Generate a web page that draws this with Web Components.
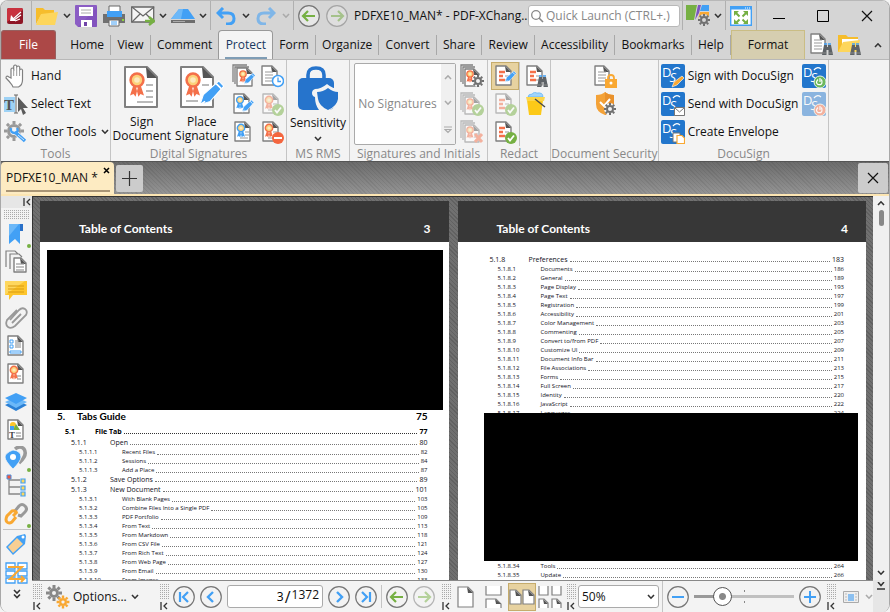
<!DOCTYPE html>
<html lang="en">
<head>
<meta charset="utf-8">
<title>PDFXE10_MAN* - PDF-XChange Editor</title>
<style>
    html, body { height: 100%; margin: 0; }
    body {
        background: #f4f4f4;
        color: #111;
        font: 12px/16px "Open Sans", "Noto Sans", sans-serif;
        overflow: hidden;
    }
</style>
</head>
<body>
<app-window></app-window>

<script>
// ---------- icons ----------
const GREY = '#808080', BLUE = '#42a0f5', ORANGE = '#f9a832', RED = '#f4704a', GREEN = '#76b043';

// sheet of paper with a folded corner
const sheet = (x, y, w, h, f = 5, sw = 1.4) => `
    <path d="M${x} ${y}h${w - f}l${f} ${f}v${h - f}h${-w}z" fill="#fff" stroke="${GREY}" stroke-width="${sw}" stroke-linejoin="round"/>
    <path d="M${x + w - f - 1} ${y}l1 ${f + 1}h${f}z" fill="#555"/>`;

// award rosette, centred on x,y
const rosette = (x, y, s = 1, c = RED) => `
    <g transform="translate(${x} ${y}) scale(${s})">
        <path d="M-2 2l-3 9 2.500-1 1.500 2 2-8zM2 2l3 9-2.500-1-1.500 2-2-8z" fill="${c}"/>
        <circle r="4.600" fill="#fbd27a" stroke="${c}" stroke-width="1.800"/>
        <circle r="2" fill="#fff" opacity=".5"/>
    </g>`;

const lines = (x, y, w, n, gap = 3, c = '#999') => {
    let out = '';
    for (let i = 0; i < n; i++) out += `<path d="M${x} ${y + i * gap}h${w}" stroke="${c}" stroke-width="1.200"/>`;
    return out;
};

const pen = (x, y, s = 1) => `
    <g transform="translate(${x} ${y}) scale(${s})">
        <path d="M0 14l2-6 9-8 3 3-8 9z" fill="${BLUE}" stroke="#fff" stroke-width=".600"/>
        <path d="M9.500 1.500l3 3M0 14l3-2" stroke="#fff" stroke-width="1"/>
    </g>`;

const okBadge = (x = 18, y = 18) => `<circle cx="${x}" cy="${y}" r="6" fill="${GREEN}"/><path d="M${x - 3} ${y}l2 2.500 4-5" fill="none" stroke="#fff" stroke-width="1.800"/>`;

const gear = (x, y, r, c, w = 2) => {
    let teeth = '';
    for (let a = 0; a < 360; a += 45) teeth += `<path d="M0 ${-r}V${-r - w}" stroke="${c}" stroke-width="${w}" transform="rotate(${a})"/>`;
    return `<g transform="translate(${x} ${y})">${teeth}<circle r="${r - w / 2}" fill="none" stroke="${c}" stroke-width="${w}"/></g>`;
};

const binoculars = (x, y) => `
    <g transform="translate(${x} ${y})">
        <path d="M2 1h3v2h1v-2h3l2 10H6.500V6h-2v5H0z" fill="#5d6266"/>
        <path d="M2 0h3M6 0h3" stroke="${BLUE}" stroke-width="1.500"/><path d="M0 9h4M7 9h4" stroke="#888"/>
    </g>`;

const signed = c => sheet(3, 2, 15, 19) + rosette(9, 8, .8, c) + lines(13, 12, 4, 2) + lines(8, 18, 8, 1);
const stack = () => `<path d="M1 18V1h12M3 20V3h12" fill="none" stroke="${GREY}" stroke-width="1.300"/>` + sheet(5, 5, 14, 17) + rosette(10, 10, .7) + lines(14, 14, 4, 2);
const redactDoc = () => sheet(3, 2, 15, 19) + `<path d="M6 8h6M6 12h4M6 16h6" stroke="${RED}" stroke-width="2.400"/>` + lines(12, 12, 4, 2, 4);
const docusign = extra => `
    <rect width="24" height="24" rx="2" fill="#2276cc"/>
    <text x="1" y="13" font-family="Open Sans, sans-serif" font-size="13" fill="#fff">D<tspan dx="-2" dy="5" font-style="italic">S</tspan></text>
    <path d="M12 6q3-4 7-1" fill="none" stroke="#fff" stroke-width="1.300"/>${extra}`;
const power = c => `<circle cx="18" cy="18" r="6" fill="${c}" stroke="#e8f2e8"/><path d="M16 15.500q-3 3 0 5 4 1 4-2.500 0-2-1-2.500M18 14v4" fill="none" stroke="#fff" stroke-width="1.200"/>`;
const circleBtn = (inner, o = 1) => [22, 22, `<g opacity="${o}"><circle cx="11" cy="11" r="10.300" fill="#f3f3f3" fill-opacity=".6" stroke="#777" stroke-width="1.200"/>${inner}</g>`];
const arrowR = c => `<path d="M5 11h12M12 6l5 5-5 5" fill="none" stroke="${c}" stroke-width="2.200"/>`;
const arrowL = c => `<path d="M17 11H5M10 6l-5 5 5 5" fill="none" stroke="${c}" stroke-width="2.200"/>`;
const fold = (x, y, w, h) => `<path d="M${x} ${y}h${w - 5}l5 5v${h - 5}h${-w}z" fill="#fff" stroke="${GREY}" stroke-width="1.200"/><path d="M${x + w - 6} ${y}l1 6h5z" fill="#555"/>`;
const dots = (w, h) => {
    let d = '';
    for (let y = 0; y < h; y += 2) for (let x = 0; x < w; x += 2) d += `M${x} ${y}h1v1h-1z`;
    return `<path d="${d}" fill="#aaa"/>`;
};

// name: [width, height, markup]
const ICONS = {
    logo: [16, 16, `<rect width="16" height="16" rx="2" fill="#8e1626"/><path d="M0 2q0-2 2-2h12q2 0 2 2L0 14z" fill="#c8323f"/><path d="M14 4L6 11M14 7l-7 5M13 11l-5 2" stroke="#fff" stroke-width="1.300"/><path d="M3 13l1-6 5 6z" fill="#fff"/>`],
    folder: [24, 20, `<path d="M1 18V2h7l2 2h9v5H6z" fill="#f6bd2c"/><path d="M1 19L6 8l17-2-3 13z" fill="#fdd65c"/>`],
    chevron: [8, 6, `<path d="M1 1l3 3.200L7 1" fill="none" stroke="currentColor" stroke-width="1.600"/>`],
    save: [22, 22, `<path d="M1 0h20q1 0 1 1v20q0 1-1 1H3l-3-3V1q0-1 1-1z" fill="#8b5dc4"/><path d="M22 2v19q0 1-1 1H3z" fill="#7d4cbb" opacity=".6"/><path d="M4 2h14v9H4z" fill="#fff"/><path d="M6 5h10M6 8h10" stroke="#aaa"/><path d="M6 15h11v7H6z" fill="#fff"/><path d="M9 17h3v4H9z" fill="#7145a8"/>`],
    printer: [22, 22, `<path d="M6 1h11v8H6z" fill="#fff" stroke="#666"/><path d="M0 9h22v9H0z" fill="#707070"/><path d="M4 6h15v6H4z" fill="${BLUE}"/><path d="M6 15h10v6H6z" fill="#fff" stroke="#666"/><path d="M8 17h6M8 19h6" stroke="${BLUE}"/><path d="M19 15h2" stroke="#8ed43c" stroke-width="2"/>`],
    mail: [24, 20, `<path d="M.700 1h22v15h-22z" fill="#f4f4f4" stroke="#666" stroke-width="1.300"/><path d="M1 1l11 9L23 1M1 16l8-8M23 16l-8-8" fill="none" stroke="#666" stroke-width="1.200"/><path d="M14 15h8M18 11l5 4-5 4" fill="none" stroke="${GREEN}" stroke-width="2.400"/>`],
    scanner: [24, 16, `<path d="M0 11L8 1h9l7 10z" fill="${BLUE}"/><path d="M8 1h4l-2 10H0z" fill="#6cb8f8"/><path d="M0 12h24v3H0z" fill="#6d6d6d"/><path d="M2 13.500h12" stroke="#aaa"/>`],
    undo: [20, 18, `<path d="M7 1L2 6l5 5M2 6h10q6 0 6 5.500T12 17h-2" fill="none" stroke="${BLUE}" stroke-width="3"/>`],
    redo: [20, 18, `<path d="M13 1l5 5-5 5M18 6H8q-6 0-6 5.500T8 17h2" fill="none" stroke="#7fb6e8" stroke-width="3"/>`],
    back: circleBtn(arrowL(GREEN)),
    forward: circleBtn(arrowR(GREEN), .5),
    search: [14, 14, `<circle cx="6" cy="6" r="4.300" fill="none" stroke="#888" stroke-width="1.300"/><path d="M9 9l4 4" stroke="#888" stroke-width="1.600"/>`],
    map: [24, 22, `<path d="M0 0h11l-3 15H0z" fill="${GREEN}"/><path d="M12 0h3l-2 8-4 7z" fill="#7b55c0"/><path d="M16 0h7v6h-9z" fill="${BLUE}"/><path d="M14 7h9v7H12z" fill="${ORANGE}"/><circle cx="18" cy="15" r="6" fill="#d5d5d5"/>` + gear(18, 15, 4, '#707070', 2)],
    fullscreen: [22, 20, `<path d="M.700.700h20.600v18.600H.700z" fill="#fff" stroke="${BLUE}" stroke-width="1.400"/><path d="M1 2h20" stroke="${BLUE}" stroke-width="3"/><path d="M15 2h1M17 2h1M19 2h1" stroke="#fff"/><path d="M6 7l3.500 3.500M16 7l-3.500 3.500M6 17l3.500-3.500M16 17l-3.500-3.500" stroke="${GREEN}" stroke-width="2"/><path d="M4 5h5l-5 5zM18 5v5l-5-5zM4 18v-5l5 5zM18 18h-5l5-5z" fill="${GREEN}"/>`],
    min: [12, 12, `<path d="M0 8.500h12" stroke="#000"/>`],
    max: [12, 12, `<path d="M.500.500h11v11H.500z" fill="none" stroke="#000"/>`],
    close: [12, 12, `<path d="M1 1l10 10M11 1L1 11" stroke="#111" stroke-width="1.200"/>`],
    closeTab: [7, 7, `<path d="M1 1l5 5M6 1L1 6" stroke="#000" stroke-width="1.500"/>`],
    plus: [15, 15, `<path d="M7.500 0v15M0 7.500h15" stroke="#333" stroke-width="1.200"/>`],
    findDoc: [23, 23, sheet(1, 1, 14, 19) + lines(4, 7, 8, 4) + binoculars(12, 11)],
    findFolder: [24, 23, `<path d="M0 19V2h8l2 2h10v15z" fill="#f6bd2c"/><path d="M4 6h16v5H4z" fill="#fff"/><path d="M0 19L5 9l17-2-3 12z" fill="#fdd65c"/>` + binoculars(12, 11)],
    hand: [24, 24, `<path d="M8 21q-2-3-6-7 0-3 3-1l2 1V5q1.500-2 2.700 0V2q1.500-2 3 0v1q1.500-2 3 0v3q1.500-2 2.800 0v10q0 5-4 7H9z" fill="#fff" stroke="${GREY}" stroke-width="1.200"/><path d="M9.700 5v7M12.700 3v9M15.600 5v7" stroke="#999"/>`],
    selectText: [24, 22, `<path d="M0 4h11v15H0z" fill="#9ed2f5"/><text x="0" y="17" font-family="Liberation Serif, serif" font-weight="bold" font-size="15" fill="#555">T</text><path d="M10 2h4M10 20h4M12 2v18" stroke="#666"/><path d="M14 4l10 11h-5l3 5-3 2-2-6-3 3z" fill="#5a5a5a"/>`],
    otherTools: [24, 24, gear(10, 11, 7, '#999', 3) + `<path d="M10 11l11 10" stroke="#f3f3f3" stroke-width="5"/><path d="M11 12l10 9" stroke="${BLUE}" stroke-width="3.400"/><path d="M7 8q-1 5 4 5 4-1 2-5" fill="none" stroke="${BLUE}" stroke-width="2.400"/><path d="M14 15l6 5" stroke="#cde6fc"/>`],
    signDoc: [38, 44, sheet(2, 2, 32, 40, 10, 2) + rosette(14, 15, 1.4) + lines(23, 20, 7, 3, 6, '#777') + lines(14, 37, 16, 1, 4, '#777')],
    placeSig: [44, 44, sheet(1, 2, 32, 40, 10, 2) + rosette(13, 15, 1.4) + lines(22, 20, 7, 1, 4, '#777') + lines(6, 36, 12, 1, 4, '#777') + pen(20, 16, 1.7)],
    signAll: [24, 24, `<path d="M1 18V1h14M3 20V3h14" fill="none" stroke="${GREY}" stroke-width="1.300"/>` + sheet(5, 4, 15, 18) + rosette(11, 10, .7) + pen(12, 9, .8)],
    timestamp: [24, 24, sheet(2, 2, 15, 19) + lines(5, 8, 8, 4) + `<circle cx="18" cy="17" r="5.500" fill="#fff" stroke="${BLUE}" stroke-width="1.500"/><path d="M18 13.500v4h3" fill="none" stroke="${BLUE}" stroke-width="1.300"/>`],
    signPen: [24, 24, sheet(2, 2, 15, 19) + rosette(8, 8, .75, BLUE) + pen(10, 8, .85)],
    validate: [24, 24, `<g opacity=".5">${signed(RED)}${okBadge()}</g>`],
    certify: [24, 24, signed(BLUE)],
    removeSig: [24, 24, signed(RED) + `<circle cx="18" cy="18" r="6" fill="#f4663f"/><path d="M14 18h8" stroke="#fff" stroke-width="2.200"/>`],
    sensitivity: [42, 44, `<path d="M11 14V9q0-7 8-7t8 7v5" fill="none" stroke="#2674cc" stroke-width="3.600"/><rect x="1" y="12" width="36" height="32" rx="5" fill="#2674cc"/><path d="M22 44q-4-5-4-13-3-1-3-4t3-4q6 0 12-5 6 5 12 5v15l-9 6z" fill="#f3f3f3"/><path d="M20 26q6 0 11-4 5 4 10 4v7q-1 7-10 11-9-4-10-11z" fill="#2674cc"/>`],
    initials: [24, 24, stack() + `<circle cx="18" cy="17" r="6" fill="#f3f3f3"/>` + gear(18, 17, 4, '#707070', 2)],
    initialsOk: [24, 24, `<g opacity=".5">${stack()}${okBadge()}</g>`],
    initialsDel: [24, 24, `<g opacity=".5">${stack()}<path d="M15 14l7 8M22 14l-7 8" stroke="${RED}" stroke-width="3"/></g>`],
    redactMark: [24, 24, redactDoc() + pen(12, 7, .8)],
    redactOkOff: [24, 24, `<g opacity=".5">${redactDoc()}${okBadge()}</g>`],
    redactOk: [24, 24, redactDoc() + okBadge()],
    redactFind: [24, 24, redactDoc() + binoculars(13, 12)],
    bucket: [24, 24, `<path d="M4 5q0-3 4-3 2-3 5-1 6-1 6 4z" fill="#9fd4fb" stroke="${BLUE}" stroke-width=".500"/><path d="M3 8h16l-2 15H5z" fill="#fcc918"/><path d="M2 5h19l-1 4H3z" fill="#fdd64a"/><path d="M11 7l10 8" stroke="#4a4a4a" stroke-width="1.500"/>`],
    lockDoc: [24, 24, sheet(2, 2, 14, 19) + lines(5, 8, 8, 4) + `<path d="M15 16v-2q0-3 3-3t3 3v2" fill="none" stroke="${ORANGE}" stroke-width="1.800"/><path d="M12 15h12v9H12z" fill="${ORANGE}"/><circle cx="18" cy="19" r="1.500" fill="#fff"/>`],
    shield: [24, 24, `<path d="M3 3q6 0 9-3 3 3 9 3v9q-1 8-9 11Q3 20 3 12z" fill="#f4a237"/><path d="M12 0q3 3 9 3v9q-1 8-9 11z" fill="#e9912b"/><path d="M7 10l4 4 6-7" fill="none" stroke="#fff" stroke-width="2"/><circle cx="17" cy="17" r="6" fill="#f3f3f3"/>` + gear(17, 17, 4, '#707070', 2)],
    dsSign: [24, 24, docusign(`<path d="M11 23l2-5 8-6 2 2-7 7z" fill="${ORANGE}" stroke="#fff" stroke-width=".600"/>`)],
    dsSend: [24, 24, docusign(`<path d="M13.500 15.500h10v8h-10z" fill="#fff" stroke="#777"/><path d="M14 16l4.500 4 4.500-4" fill="none" stroke="#777"/>`)],
    dsEnvelope: [24, 24, docusign(`<path d="M12 13h7v9h-7z" fill="#fff" stroke="#777"/><path d="M16 15.500h5l2.500 2.500v5.500H16z" fill="#fff" stroke="${ORANGE}" stroke-width="1.200"/>`)],
    dsOn: [24, 24, docusign(power('#6cb85c'))],
    dsOff: [24, 24, `<g opacity=".5">${docusign(power(RED))}</g>`],
    up: [8, 6, `<path d="M1 5l3-3.200L7 5" fill="none" stroke="currentColor" stroke-width="1.600"/>`],
    more: [8, 8, `<path d="M0 1h8M1 3.500l3 3 3-3z" fill="none" stroke="currentColor" stroke-width="1.200"/>`],
    doubleDown: [8, 10, `<path d="M1 1l3 3 3-3M1 5.500l3 3 3-3" fill="none" stroke="currentColor" stroke-width="1.600"/>`],
    pageDown: [8, 8, `<path d="M1 0l3 3.500L7 0M0 7h8" fill="none" stroke="currentColor" stroke-width="1.500"/>`],
    dock: [8, 8, `<path d="M1 0v8M7 1L4 4l3 3" fill="none" stroke="#333" stroke-width="1.300"/>`],
    grip: [10, 16, dots(10, 16)],
    gripWide: [26, 10, dots(26, 10)],
    bookmark: [24, 24, `<path d="M5 2h14v7h-3v13l-5-5-6 5z" fill="${BLUE}"/><path d="M5 2h10L5 14z" fill="#6cb8f8"/><path d="M16 2h3v7h-3z" fill="#2a70c8"/>`],
    thumbs: [24, 24, `<path d="M2 17V1h9l3 3M6 19V4h9l3 3" fill="none" stroke="${GREY}" stroke-width="1.200"/>` + sheet(10, 8, 12, 14) + lines(12, 14, 8, 3)],
    comments: [24, 24, `<path d="M1 3h22v14H9l-4 5v-5H1z" fill="#fdc52c"/><path d="M1 3h20L1 17z" fill="#fed75e"/><path d="M4 8h16M4 11h16M4 14h16" stroke="#d89b10"/>`],
    clip: [24, 24, `<path d="M6 14L15 4q3-3 6-1t1 6L11 20q-4 3-7 1t-1-7L13 4M8 17l9-9" fill="none" stroke="#999" stroke-width="1.800"/>`],
    fields: [24, 24, sheet(4, 2, 15, 19) + `<path d="M6 6h3v3H6zM6 11h3v3H6zM6 17h11v2H6z" fill="none" stroke="${BLUE}"/>` + lines(11, 7, 4, 1) + lines(11, 9, 6, 3, 2)],
    sigPanel: [24, 24, sheet(4, 2, 15, 19) + rosette(10, 8, .8) + lines(13, 14, 4, 2)],
    layers: [24, 24, `<path d="M1 15l11 6 11-6-11-5z" fill="#2a7fd4"/><path d="M1 12l11 6 11-6-11-5z" fill="#6cb8f8"/><path d="M1 8l11 6 11-6-11-5z" fill="${BLUE}"/>`],
    content: [24, 24, sheet(4, 2, 15, 19) + `<circle cx="9" cy="7" r="3" fill="#fcc52c"/><path d="M12 6l4 6H9z" fill="${GREEN}"/><path d="M6 8h4v4H6z" fill="${BLUE}"/><text x="5" y="20" font-family="Liberation Serif, serif" font-weight="bold" font-size="9" fill="#444">T</text>` + lines(12, 15, 5, 2)],
    places: [24, 24, `<path d="M11 3q5-4 9 0 4 6-5 14" fill="none" stroke="#999" stroke-width="3.500"/><path d="M9 23Q1 15 1 11t8-7q8 1 8 7 0 4-8 12z" fill="${BLUE}" stroke="#f3f3f3" stroke-width=".800"/><circle cx="9" cy="11" r="3" fill="#fff"/>`],
    tree: [24, 24, `<path d="M5 3v17h11M5 6h11M5 13h11" fill="none" stroke="#888" stroke-width="1.300"/><path d="M3 1h4v4H3z" fill="#f4563a" stroke="#4a90e0"/><path d="M17 5h4v4h-4zM17 12h4v4h-4zM17 18h4v4h-4z" fill="#fdd65c" stroke="${BLUE}" stroke-width="1.200"/>`],
    links: [24, 24, `<path d="M11 9l4-5q3-3 6 0t0 6l-4 4-3-1" fill="none" stroke="#999" stroke-width="3"/><path d="M12 15l-4 5q-3 2-5 0t0-6l5-5q3-1 5 2M9 14l4-4" fill="none" stroke="${ORANGE}" stroke-width="3"/>`],
    tag: [24, 24, `<path d="M2 14L13 3l8-2 1 2-1 8L9 22z" fill="${BLUE}"/><path d="M4 14l9-9 6 6-10 9z" fill="#f8cf94"/><circle cx="19" cy="4" r="1.500" fill="#fff"/>`],
    order: [24, 24, `<path d="M2 2h9v6H2zM14 2h9v6h-9zM2 10h9v5H2zM14 10h9v5h-9zM2 17h9v5H2zM14 17h9v5h-9z" fill="#fff" stroke="${BLUE}" stroke-width="1.300"/><path d="M4 6h14L6 18h13M17 15l3 3-3 3" fill="none" stroke="${ORANGE}" stroke-width="2"/>`],
    gears: [24, 24, gear(8, 8, 5, '#888', 3) + gear(17, 17, 4, '#f9a832', 2.400)],
    first: circleBtn(`<path d="M7 6v10M15 6l-5 5 5 5" fill="none" stroke="${BLUE}" stroke-width="2.200"/>`),
    prev: circleBtn(`<path d="M13 6l-5 5 5 5" fill="none" stroke="${BLUE}" stroke-width="2.400"/>`),
    next: circleBtn(`<path d="M9 6l5 5-5 5" fill="none" stroke="${BLUE}" stroke-width="2.400"/>`),
    last: circleBtn(`<path d="M15 6v10M7 6l5 5-5 5" fill="none" stroke="${BLUE}" stroke-width="2.200"/>`),
    zoomOut: circleBtn(`<path d="M5 11h12" stroke="${BLUE}" stroke-width="2"/>`),
    zoomIn: circleBtn(`<path d="M5 11h12M11 5v12" stroke="${BLUE}" stroke-width="2"/>`),
    single: [24, 24, fold(4, 2, 15, 20)],
    continuous: [24, 24, `<path d="M4 1v9h15V1" fill="#fff" stroke="${GREY}" stroke-width="1.200"/><path d="M4 23v-9h10l5 5v4" fill="#fff" stroke="${GREY}" stroke-width="1.200"/><path d="M13 14l1 5h5z" fill="#555"/>`],
    twoPages: [26, 24, fold(1, 5, 11, 14) + fold(14, 5, 11, 14)],
    twoCont: [24, 24, `<path d="M1 1v9h9V1M14 1v9h9V1M1 23v-9h5l4 4v5M14 23v-9h5l4 4v5" fill="#fff" stroke="${GREY}" stroke-width="1.200"/><path d="M5 14l1 5h4zM18 14l1 5h4z" fill="#555"/>`],
    fit: [16, 12, `<path d="M.500.500h15v11H.500z" fill="#eee" stroke="#aaa"/><path d="M5 3h6v7H5z" fill="#8cc0f0"/><path d="M2 3h2M2 6h2M2 9h2M12 3h2M12 6h2M12 9h2" stroke="#bbb"/>`]
};

// ---------- components ----------
// registers an element whose shadow root is cloned from a template
function define(name, html) {
    const template = document.createElement('template');
    template.innerHTML = html;
    customElements.define(name, class extends HTMLElement {
        constructor() {
            super();
            this.attachShadow({ mode: 'open' }).append(template.content.cloneNode(true));
        }
    });
}

class UiIcon extends HTMLElement {
    constructor() {
        super();
        this.attachShadow({ mode: 'open' });
    }
    connectedCallback() {
        const [w, h, body] = ICONS[this.getAttribute('name')];
        this.shadowRoot.innerHTML = `
            <style>
                :host { display: block; flex: none; color: #333; }
                svg { display: block; }
            </style>
            <svg width="${w}" height="${h}" viewBox="0 0 ${w} ${h}" aria-hidden="true">${body}</svg>`;
    }
}
customElements.define('ui-icon', UiIcon);

// button with an icon and an optional slotted caption
class ToolButton extends HTMLElement {
    constructor() {
        super();
        this.attachShadow({ mode: 'open' });
    }
    connectedCallback() {
        const label = this.getAttribute('label');
        this.shadowRoot.innerHTML = `
            <style>
                :host { display: block; flex: none; }
                button {
                    display: flex; align-items: center; gap: 3px;
                    width: 100%; height: 100%; padding: 0; border: 0;
                    background: none; color: inherit; font: inherit; white-space: nowrap;
                }
                :host([big]) button { flex-direction: column; justify-content: start; gap: 6px; line-height: 14px; }
                :host([center]) button { justify-content: center; }
                :host([pressed]) button { background: #e7d2a0; border: 1px solid #c6ac6c; }
                :host([dim]) ui-icon { color: #aaa; }
            </style>
            <button type="button"${label ? ` aria-label="${label}"` : ''}>
                <ui-icon name="${this.getAttribute('icon')}"></ui-icon><slot></slot>
            </button>`;
    }
}
customElements.define('tool-button', ToolButton);

define('title-bar', `
    <style>
        :host { display: flex; align-items: center; height: 29px; padding: 0 16px 0 6px; background: #d5d5d5; }
        .sep { width: 1px; align-self: stretch; background: #b0b0b0; flex: none; }
        .files { display: flex; align-items: center; gap: 4px; padding: 0 3px; margin-left: 8px; border-left: 1px solid #b0b0b0; align-self: stretch; }
        .files [icon=save], .files [icon=printer] { margin-right: 2px; }
        .nav { display: flex; align-items: center; gap: 6px; padding: 0 3px 0 5px; }
        .history { display: flex; gap: 6px; padding: 0 6px 0 4px; }
        h1 { margin: 0; font: inherit; white-space: nowrap; flex: 0 0 auto; min-width: 174px; }
        label {
            display: flex; align-items: center; gap: 2px; flex: 1 1 0; min-width: 0;
            height: 22px; box-sizing: border-box; padding: 0 0 0 1px; margin-right: 2px;
            border: 1px solid #b8b8b8; border-radius: 3px; background: #fff;
        }
        input { flex: 1; min-width: 0; padding: 0; border: 0; outline: 0; font: inherit; background: none; }
        input::placeholder { color: #888; opacity: 1; }
        .view { display: flex; align-items: center; gap: 4px; padding: 0 3px; }
        .full { padding: 0 4px; }
        .win { display: flex; align-items: center; gap: 32px; padding-left: 16px; }
        .files, .nav, .history, .view { flex: none; }
    </style>
    <ui-icon name="logo"></ui-icon>
    <div class="files">
        <tool-button icon="folder" label="Open"></tool-button>
        <tool-button icon="chevron" label="Open recent"></tool-button>
        <tool-button icon="save" label="Save"></tool-button>
        <tool-button icon="printer" label="Print"></tool-button>
        <tool-button icon="mail" label="Email"></tool-button>
        <tool-button icon="chevron" label="Email options"></tool-button>
        <tool-button icon="scanner" label="Scan"></tool-button>
        <tool-button icon="chevron" label="Scan options"></tool-button>
    </div>
    <span class="sep"></span>
    <div class="nav">
        <tool-button icon="undo" label="Undo"></tool-button>
        <tool-button icon="chevron" label="Undo list"></tool-button>
        <tool-button icon="redo" label="Redo"></tool-button>
        <tool-button icon="chevron" dim label="Redo list"></tool-button>
    </div>
    <span class="sep"></span>
    <div class="history">
        <tool-button icon="back" label="Previous view"></tool-button>
        <tool-button icon="forward" label="Next view"></tool-button>
    </div>
    <h1>PDFXE10_MAN* - PDF-XChang..</h1>
    <label><ui-icon name="search"></ui-icon><input type="text" placeholder="Quick Launch (CTRL+.)" aria-label="Quick Launch"></label>
    <span class="sep"></span>
    <div class="view">
        <tool-button icon="map" label="UI options"></tool-button>
        <tool-button icon="chevron" label="UI options list"></tool-button>
    </div>
    <span class="sep"></span>
    <div class="view full"><tool-button icon="fullscreen" label="Full screen"></tool-button></div>
    <span class="sep"></span>
    <div class="win">
        <tool-button icon="min" label="Minimize"></tool-button>
        <tool-button icon="max" label="Maximize"></tool-button>
        <tool-button icon="close" label="Close"></tool-button>
    </div>
`);

define('ribbon-tab', `
    <style>
        :host { display: flex; flex: 1 1 auto; align-items: center; }
        button {
            flex: 1; height: 29px; padding: 0; border: 0; background: none;
            color: inherit; font: inherit; white-space: nowrap;
        }
        :host::after { content: ""; width: 1px; height: 20px; background: #a8a8a8; }
        :host([plain])::after, :host([kind])::after { display: none; }
        :host([kind=file]) { flex: 0 0 55px; margin-right: 8px; }
        :host([kind=file]) button { background: #ac4847; color: #fff; border-radius: 3px 3px 0 0; border: 1px solid #96605f; border-bottom: 0; }
        :host([kind=active]) button {
            background: #f4f4f4 linear-gradient(#7f9db5, #7f9db5) center bottom / 42px 2px no-repeat;
            color: #17375e; border: 1px solid #999; border-bottom: 0; border-radius: 4px 4px 0 0;
        }
        :host([kind=format]) { flex: 0 0 74px; }
        :host([kind=format]) button { background: #d6ceb0; border: 1px solid #cabd84; border-bottom: 0; }
    </style>
    <button type="button"><slot></slot></button>
`);

define('ribbon-tabs', `
    <style>
        :host { display: flex; align-items: center; height: 30px; box-sizing: border-box; background: #d5d5d5; border-bottom: 1px solid #b8b8b8; }
        nav { display: flex; flex: 1; }
        .find { display: flex; align-items: center; gap: 5px; flex: none; padding-left: 5px; }
        .find tool-button[icon=up] { width: 22px; }
    </style>
    <nav>
        <ribbon-tab kind="file">File</ribbon-tab>
        <ribbon-tab>Home</ribbon-tab>
        <ribbon-tab>View</ribbon-tab>
        <ribbon-tab plain>Comment</ribbon-tab>
        <ribbon-tab kind="active">Protect</ribbon-tab>
        <ribbon-tab>Form</ribbon-tab>
        <ribbon-tab>Organize</ribbon-tab>
        <ribbon-tab>Convert</ribbon-tab>
        <ribbon-tab>Share</ribbon-tab>
        <ribbon-tab>Review</ribbon-tab>
        <ribbon-tab>Accessibility</ribbon-tab>
        <ribbon-tab>Bookmarks</ribbon-tab>
        <ribbon-tab>Help</ribbon-tab>
        <ribbon-tab kind="format">Format</ribbon-tab>
    </nav>
    <div class="find">
        <tool-button icon="findDoc" label="Find"></tool-button>
        <tool-button icon="findFolder" label="Search"></tool-button>
        <tool-button icon="up" center label="Collapse ribbon"></tool-button>
    </div>
`);

define('ribbon-group', `
    <style>
        :host { display: flex; flex-direction: column; flex: none; box-sizing: border-box; border-right: 1px solid #c4c4c4; }
        .tools { display: flex; flex: 1; justify-content: center; padding-top: 2px; }
        .title { height: 14px; line-height: 14px; text-align: center; color: #888; white-space: nowrap; }
    </style>
    <div class="tools"><slot></slot></div>
    <div class="title"><slot name="title"></slot></div>
`);

define('signature-list', `
    <style>
        :host { display: flex; box-sizing: border-box; width: 102px; height: 82px; margin-top: 1px; border: 1px solid #aaa; border-radius: 2px; background: #fff; color: #888; }
        p { flex: 1; margin: auto; text-align: center; white-space: nowrap; }
        .scroll { display: flex; flex-direction: column; justify-content: space-around; width: 14px; background: #f0f0f0; }
        tool-button { width: 14px; }
    </style>
    <p>No Signatures</p>
    <div class="scroll">
        <tool-button icon="up" center dim label="Up"></tool-button>
        <tool-button icon="chevron" center dim label="Down"></tool-button>
        <tool-button icon="more" center dim label="Expand"></tool-button>
    </div>
`);

define('tool-ribbon', `
    <style>
        :host { display: flex; height: 102px; box-sizing: border-box; background: #f3f3f3; border-bottom: 1px solid #555; }
        .col { display: grid; grid-auto-rows: 28px; align-items: center; align-content: start; }
        .tools { width: 110px; }
        .tools .col { width: 100%; padding-left: 3px; box-sizing: border-box; }
        .other { display: flex; align-items: center; gap: 4px; }
        .digital { width: 176px; }
        .digital [big] { margin-top: 3px; text-align: center; }
        .digital [icon=placeSig] { margin-left: 4px; }
        .digital .col { margin-left: 4px; gap: 0 4px; grid-template-columns: 24px 24px; }
        .rms { width: 63px; }
        .rms [big] { margin-top: 4px; }
        .initials { width: 138px; }
        .initials .col { margin-left: 4px; }
        .redact { width: 63px; }
        .redact .left { width: 28px; justify-items: center; border-right: 1px solid #c4c4c4; height: 84px; }
        .redact .right { margin-left: 4px; }
        .redact [pressed] { width: 28px; height: 28px; }
        .security { width: 108px; }
        .docusign { width: 170px; }
        .docusign .right { margin-left: 4px; grid-template-columns: 24px; }
    </style>
    <ribbon-group class="tools">
        <div class="col">
            <tool-button icon="hand">Hand</tool-button>
            <tool-button icon="selectText">Select Text</tool-button>
            <span class="other"><tool-button icon="otherTools">Other Tools</tool-button><ui-icon name="chevron"></ui-icon></span>
        </div>
        <span slot="title">Tools</span>
    </ribbon-group>
    <ribbon-group class="digital">
        <tool-button icon="signDoc" big><span>Sign<br>Document</span></tool-button>
        <tool-button icon="placeSig" big><span>Place<br>Signature</span></tool-button>
        <div class="col">
            <tool-button icon="signAll" label="Sign all"></tool-button>
            <tool-button icon="timestamp" label="Timestamp"></tool-button>
            <tool-button icon="signPen" label="Sign"></tool-button>
            <tool-button icon="validate" label="Validate"></tool-button>
            <tool-button icon="certify" label="Certify"></tool-button>
            <tool-button icon="removeSig" label="Clear signatures"></tool-button>
        </div>
        <span slot="title">Digital Signatures</span>
    </ribbon-group>
    <ribbon-group class="rms">
        <tool-button icon="sensitivity" big><span>Sensitivity</span><ui-icon name="chevron"></ui-icon></tool-button>
        <span slot="title">MS RMS</span>
    </ribbon-group>
    <ribbon-group class="initials">
        <signature-list></signature-list>
        <div class="col">
            <tool-button icon="initials" label="Manage"></tool-button>
            <tool-button icon="initialsOk" label="Apply"></tool-button>
            <tool-button icon="initialsDel" label="Delete"></tool-button>
        </div>
        <span slot="title">Signatures and Initials</span>
    </ribbon-group>
    <ribbon-group class="redact">
        <div class="col left">
            <tool-button icon="redactMark" pressed center label="Mark for redaction"></tool-button>
            <tool-button icon="redactOkOff" label="Apply selected"></tool-button>
            <tool-button icon="redactOk" label="Apply all"></tool-button>
        </div>
        <div class="col right">
            <tool-button icon="redactFind" label="Find and redact"></tool-button>
            <tool-button icon="bucket" label="Sanitize"></tool-button>
        </div>
        <span slot="title">Redact</span>
    </ribbon-group>
    <ribbon-group class="security">
        <div class="col">
            <tool-button icon="lockDoc" label="Security"></tool-button>
            <tool-button icon="shield" label="Policies"></tool-button>
        </div>
        <span slot="title">Document Security</span>
    </ribbon-group>
    <ribbon-group class="docusign">
        <div class="col">
            <tool-button icon="dsSign">Sign with DocuSign</tool-button>
            <tool-button icon="dsSend">Send with DocuSign</tool-button>
            <tool-button icon="dsEnvelope">Create Envelope</tool-button>
        </div>
        <div class="col right">
            <tool-button icon="dsOn" label="Log in"></tool-button>
            <tool-button icon="dsOff" label="Log out"></tool-button>
        </div>
        <span slot="title">DocuSign</span>
    </ribbon-group>
`);

define('document-tabs', `
    <style>
        :host {
            display: flex; align-items: flex-end; gap: 2px; height: 34px; box-sizing: border-box;
            border-bottom: 2px solid #fce5b2;
            background: repeating-linear-gradient(45deg, #0001 0 1px, #0000 1px 3px), linear-gradient(#6c6c6c, #949494);
        }
        .tab { display: flex; height: 32px; box-sizing: border-box; padding: 0 4px 0 5px; background: #fdebc2; border-radius: 4px 4px 0 0; }
        .tab button { border: 0; padding: 4px 0 0; background: none; font: inherit; color: inherit; }
        .name { width: 94px; text-align: left; white-space: nowrap; }
        .inner { display: flex; gap: 3px; height: 30px; box-sizing: border-box; border-bottom: 2px solid #a99575; }
        .add { width: 27px; height: 27px; margin-bottom: 2px; background: #ccc; border-radius: 2px; }
        .close { width: 30px; height: 30px; margin: 0 1px 1px auto; background: #ccc; border-radius: 2px; }
        .x { padding-top: 5px; }
    </style>
    <div class="tab"><div class="inner"><button class="name" type="button">PDFXE10_MAN *</button><div class="x"><tool-button icon="closeTab" label="Close tab"></tool-button></div></div></div>
    <tool-button class="add" icon="plus" center label="New tab"></tool-button>
    <tool-button class="close" icon="close" center label="Close document"></tool-button>
`);

define('side-panel', `
    <style>
        :host { display: flex; flex-direction: column; width: 31px; background: #f3f3f3; }
        .dock { display: flex; justify-content: flex-end; padding: 2px 1px 2px 0; background: #e6e6e6; }
        .grip { padding: 2px 3px 0; }
        .item { display: flex; align-items: center; padding-left: 3px; height: 28px; position: relative; }
        .item[data-open]::after {
            content: ""; position: absolute; right: 1px; bottom: 0;
            width: 4px; height: 4px; border-radius: 2px; background: ${GREEN};
        }
        hr { width: 28px; border: 0; border-top: 1px solid #c4c4c4; margin: 1px auto; }
        .more { margin: 2px auto auto; }
    </style>
    <div class="dock"><tool-button icon="dock" label="Hide panes"></tool-button></div>
    <div class="grip"><ui-icon name="gripWide"></ui-icon></div>
    <div class="item" data-open><tool-button icon="bookmark" label="Bookmarks"></tool-button></div>
    <div class="item"><tool-button icon="thumbs" label="Thumbnails"></tool-button></div>
    <div class="item"><tool-button icon="comments" label="Comments"></tool-button></div>
    <div class="item"><tool-button icon="clip" label="Attachments"></tool-button></div>
    <div class="item"><tool-button icon="fields" label="Fields"></tool-button></div>
    <div class="item"><tool-button icon="sigPanel" label="Signatures"></tool-button></div>
    <div class="item"><tool-button icon="layers" label="Layers"></tool-button></div>
    <div class="item"><tool-button icon="content" label="Content"></tool-button></div>
    <div class="item" data-open><tool-button icon="places" label="Destinations"></tool-button></div>
    <div class="item"><tool-button icon="tree" label="Model tree"></tool-button></div>
    <div class="item" data-open><tool-button icon="links" label="Links"></tool-button></div>
    <hr>
    <div class="item"><tool-button icon="tag" label="Tags"></tool-button></div>
    <div class="item"><tool-button icon="order" label="Order"></tool-button></div>
    <div class="more"><tool-button icon="doubleDown" label="More"></tool-button></div>
`);

// one contents entry, written as number|title|page
class TocLine extends HTMLElement {
    constructor() {
        super();
        this.attachShadow({ mode: 'open' });
    }
    connectedCallback() {
        const [num, title, page] = this.textContent.split('|');
        this.shadowRoot.innerHTML = `
            <style>
                :host { display: flex; height: 9px; font-size: 6px; line-height: 9px; padding-left: 22px; white-space: nowrap; }
                .num { width: 43px; flex: none; }
                .dots { flex: 1; height: 6px; margin: 0 2px; border-bottom: 1px dotted #777; }
                :host([level="3"]) { height: 10px; font-size: 7px; line-height: 10px; padding-left: 14px; }
                :host([level="3"]) .num { width: 39px; }
                :host([level="2"]) { height: 13px; font-size: 7px; line-height: 13px; padding-left: 8px; font-weight: bold; color: #000; }
                :host([level="2"]) .num { width: 30px; }
                :host([level="2"]) .dots { height: 8px; border-color: #333; }
                :host([level="1"]) { height: 15px; font: bold 10px/13px Lato, "Open Sans", sans-serif; padding-left: 0; color: #000; }
                :host([level="1"]) .num { width: 20px; }
                :host([level="1"]) .dots { border: 0; }
            </style>
            <span class="num">${num}</span><span>${title}</span><span class="dots"></span><span>${page}</span>`;
    }
}
customElements.define('toc-line', TocLine);

define('pdf-page', `
    <style>
        :host { display: block; flex: 1; min-width: 0; background: #fff; color: #112; }
        header {
            display: flex; justify-content: space-between; height: 41px; box-sizing: border-box;
            padding: 20px 18px 0 39px; background: #373737; color: #fff; font: bold 12px/16px Lato, "Open Sans", sans-serif;
        }
    </style>
    <header><slot name="head"></slot><slot name="number"></slot></header>
    <slot></slot>
`);

define('document-view', `
    <style>
        :host {
            display: flex; gap: 9px; padding: 4px 7px 0 7px; box-sizing: border-box; overflow: hidden; min-width: 0;
            border-left: 1px solid #333; border-top: 1px solid #333;
            background: repeating-linear-gradient(45deg, #0002 0 1px, #0000 1px 3px), #707070;
        }
        .mask { background: #000; }
        .one { height: 160px; margin: 8px 6px 0 7px; }
        .toc { display: block; padding: 0 21px 0 17px; }
        .right { padding: 13px 22px 0 18px; }
        .two { height: 148px; margin: -5px 8px 0 26px; position: relative; }
        .tail { padding-top: 1px; }
    </style>
    <pdf-page>
        <span slot="head">Table of Contents</span><span slot="number">3</span>
        <div class="mask one"></div>
        <div class="toc">
            <toc-line level="1">5.|Tabs Guide|75</toc-line>
            <toc-line level="2">5.1|File Tab|77</toc-line>
            <toc-line level="3">5.1.1|Open|80</toc-line>
            <toc-line>5.1.1.1|Recent Files|82</toc-line>
            <toc-line>5.1.1.2|Sessions|84</toc-line>
            <toc-line>5.1.1.3|Add a Place|87</toc-line>
            <toc-line level="3">5.1.2|Save Options|89</toc-line>
            <toc-line level="3">5.1.3|New Document|101</toc-line>
            <toc-line>5.1.3.1|With Blank Pages|103</toc-line>
            <toc-line>5.1.3.2|Combine Files Into a Single PDF|105</toc-line>
            <toc-line>5.1.3.3|PDF Portfolio|109</toc-line>
            <toc-line>5.1.3.4|From Text|113</toc-line>
            <toc-line>5.1.3.5|From Markdown|118</toc-line>
            <toc-line>5.1.3.6|From CSV File|121</toc-line>
            <toc-line>5.1.3.7|From Rich Text|124</toc-line>
            <toc-line>5.1.3.8|From Web Page|127</toc-line>
            <toc-line>5.1.3.9|From Email|130</toc-line>
            <toc-line>5.1.3.10|From Images|133</toc-line>
        </div>
    </pdf-page>
    <pdf-page>
        <span slot="head">Table of Contents</span><span slot="number">4</span>
        <div class="toc right">
            <toc-line level="3">5.1.8|Preferences|183</toc-line>
            <toc-line>5.1.8.1|Documents|186</toc-line>
            <toc-line>5.1.8.2|General|189</toc-line>
            <toc-line>5.1.8.3|Page Display|193</toc-line>
            <toc-line>5.1.8.4|Page Text|197</toc-line>
            <toc-line>5.1.8.5|Registration|199</toc-line>
            <toc-line>5.1.8.6|Accessibility|201</toc-line>
            <toc-line>5.1.8.7|Color Management|203</toc-line>
            <toc-line>5.1.8.8|Commenting|205</toc-line>
            <toc-line>5.1.8.9|Convert to/from PDF|207</toc-line>
            <toc-line>5.1.8.10|Customize UI|209</toc-line>
            <toc-line>5.1.8.11|Document Info Bar|211</toc-line>
            <toc-line>5.1.8.12|File Associations|213</toc-line>
            <toc-line>5.1.8.13|Forms|215</toc-line>
            <toc-line>5.1.8.14|Full Screen|217</toc-line>
            <toc-line>5.1.8.15|Identity|220</toc-line>
            <toc-line>5.1.8.16|JavaScript|222</toc-line>
            <toc-line>5.1.8.17|Languages|224</toc-line>
        </div>
        <div class="mask two"></div>
        <div class="toc right tail">
            <toc-line>5.1.8.34|Tools|264</toc-line>
            <toc-line>5.1.8.35|Update|266</toc-line>
        </div>
    </pdf-page>
`);

define('scroll-bar', `
    <style>
        :host { display: flex; flex-direction: column; align-items: center; width: 16px; padding: 4px 0; box-sizing: border-box; background: #f0f0f0; }
        .thumb { width: 5px; height: 16px; margin-top: 4px; border-radius: 3px; background: #888; }
        .down { margin-top: auto; }
    </style>
    <tool-button icon="up" label="Scroll up"></tool-button>
    <div class="thumb"></div>
    <tool-button class="down" icon="chevron" label="Scroll down"></tool-button>
`);

define('bar-grip', `
    <style>
        :host { display: flex; flex-direction: column; flex: none; gap: 2px; width: 10px; }
    </style>
    <ui-icon name="grip"></ui-icon><ui-icon name="dock"></ui-icon>
`);

define('status-bar', `
    <style>
        :host { display: flex; align-items: center; height: 32px; min-width: 0; padding: 0 0 0 1px; box-sizing: border-box; background: #f3f3f3; border-top: 1px solid #888; }
        .options { display: flex; align-items: center; gap: 4px; flex: 0 0 117px; padding-left: 3px; box-sizing: border-box; }
        .pager, .modes, .zoom { display: flex; align-items: center; }
        .pager { gap: 5px; margin: 0 7px 0 3px; }
        .page {
            display: flex; align-items: center; width: 96px; height: 23px; box-sizing: border-box; padding-right: 3px;
            border: 1px solid #aaa; border-radius: 3px; background: #fff;
        }
        .page input { flex: 1; min-width: 0; padding: 0; border: 0; outline: 0; font: inherit; text-align: right; }
        .slash { font-size: 16px; padding: 0 1px; }
        .total { padding-bottom: 3px; }
        .sep { width: 1px; align-self: stretch; background: #c4c4c4; margin: 0 -1px; flex: none; }
        .modes { margin-right: 3px; }
        .modes tool-button { width: 28px; height: 28px; }
        .select { display: grid; align-items: center; width: 81px; margin: 0 4px 0 1px; flex: none; }
        .select > * { grid-area: 1 / 1; }
        .select ui-icon { justify-self: end; margin-right: 4px; pointer-events: none; }
        select { appearance: none; height: 23px; padding: 0 3px; border: 1px solid #aaa; border-radius: 3px; background: #fff; font: inherit; color: inherit; }
        .zoom { flex: 1; gap: 5px; margin: 0 6px 0 5px; min-width: 0; }
        input[type=range] {
            appearance: none; flex: 1; width: 0; height: 20px; margin: 0;
            background:
                linear-gradient(#999, #999) 0 50% / 28px 3px no-repeat,
                linear-gradient(#c0c0c0, #c0c0c0) 0 50% / 100% 3px no-repeat,
                linear-gradient(#888 0 2px, #0000 2px 11px, #888 11px 13px) 50% 50% / 1px 13px no-repeat;
        }
        input[type=range]::-webkit-slider-thumb {
            appearance: none; width: 19px; height: 19px; box-sizing: border-box; border-radius: 50%;
            border: 1px solid #555; background: radial-gradient(circle, #888 0 3px, #fff 4px);
        }
        .fit, .fitmore { margin-left: 6px; }
    </style>
    <bar-grip></bar-grip>
    <div class="options"><tool-button icon="gears">Options...</tool-button><ui-icon name="chevron"></ui-icon></div>
    <bar-grip></bar-grip>
    <div class="pager">
        <tool-button icon="first" label="First page"></tool-button>
        <tool-button icon="prev" label="Previous page"></tool-button>
        <label class="page"><input type="text" value="3" aria-label="Page"><span class="slash">/</span><span class="total">1372</span></label>
        <tool-button icon="next" label="Next page"></tool-button>
        <tool-button icon="last" label="Last page"></tool-button>
        <span class="sep"></span>
        <tool-button icon="back" label="Back"></tool-button>
        <tool-button icon="forward" label="Forward"></tool-button>
    </div>
    <bar-grip></bar-grip>
    <div class="modes">
        <tool-button icon="single" center label="Single page"></tool-button>
        <tool-button icon="continuous" center label="Continuous"></tool-button>
        <tool-button icon="twoPages" center pressed label="Two pages"></tool-button>
        <tool-button icon="twoCont" center label="Two pages continuous"></tool-button>
    </div>
    <bar-grip></bar-grip>
    <div class="select"><select aria-label="Zoom"><option>50%</option><option>100%</option></select><ui-icon name="chevron"></ui-icon></div>
    <span class="sep"></span>
    <div class="zoom">
        <tool-button icon="zoomOut" label="Zoom out"></tool-button>
        <input type="range" min="0" max="100" value="24" aria-label="Zoom level">
        <tool-button icon="zoomIn" label="Zoom in"></tool-button>
    </div>
    <bar-grip></bar-grip>
    <tool-button class="fit" icon="fit" label="Fit"></tool-button>
    <tool-button class="fitmore" icon="chevron" dim label="Fit options"></tool-button>
`);

define('app-window', `
    <style>
        :host {
            display: grid; grid-template: auto auto auto auto minmax(0, 1fr) auto / auto minmax(0, 1fr) auto;
            height: 100vh; box-sizing: border-box; border: 1px solid #a8a8a8; border-top-color: #b8b8b8; border-bottom: 0; border-radius: 8px;
            overflow: hidden; background: #f3f3f3;
        }
        title-bar, ribbon-tabs, tool-ribbon, document-tabs { grid-column: 1 / -1; }
        side-panel { grid-row: 5 / 7; }
        .corner { display: flex; flex-direction: column; align-items: center; width: 16px; padding-top: 2px; background: #e6e6e6; box-sizing: border-box; }
    </style>
    <title-bar></title-bar>
    <ribbon-tabs></ribbon-tabs>
    <tool-ribbon></tool-ribbon>
    <document-tabs></document-tabs>
    <side-panel></side-panel>
    <document-view></document-view>
    <scroll-bar></scroll-bar>
    <status-bar></status-bar>
    <div class="corner"><tool-button icon="pageDown" label="Next page"></tool-button></div>
`);
</script>
</body>
</html>
